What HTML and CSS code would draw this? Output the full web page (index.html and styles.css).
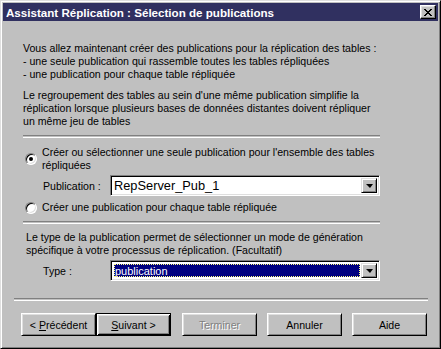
FILE: index.html
```html
<!DOCTYPE html>
<html lang="fr">
<head>
<meta charset="utf-8">
<title>Assistant Réplication</title>
<link rel="stylesheet" href="styles.css">
</head>
<body>
<div class="window">
  <div class="titlebar">
    <span class="title">Assistant Réplication : Sélection de publications</span>
    <span class="close"><svg width="8" height="7" viewBox="0 0 8 7"><path d="M0 0h2v1h1v1h2v-1h1v-1h2v1h-1v1h-1v1h-1v1h1v1h1v1h1v1h-2v-1h-1v-1h-2v1h-1v1h-2v-1h1v-1h1v-1h1v-1h-1v-1h-1v-1h-1z" fill="#000"/></svg></span>
  </div>
  <div class="main">
    <p class="intro">Vous allez maintenant créer des publications pour la réplication des tables :<br>- une seule publication qui rassemble toutes les tables répliquées<br>- une publication pour chaque table répliquée</p>
    <p class="intro second">Le regroupement des tables au sein d'une même publication simplifie la<br>réplication lorsque plusieurs bases de données distantes doivent répliquer<br>un même jeu de tables</p>
    <div class="sep"></div>
    <div class="option first">
      <span class="radio checked"></span>
      <span class="option-text">Créer ou sélectionner une seule publication pour l'ensemble des tables<br>répliquées</span>
    </div>
    <div class="field pub">
      <span class="field-label">Publication :</span>
      <div class="combo">
        <span class="combo-value big">RepServer_Pub_1</span>
        <span class="combo-btn"><span class="arrow"></span></span>
      </div>
    </div>
    <div class="option second-opt">
      <span class="radio"></span>
      <span class="option-text">Créer une publication pour chaque table répliquée</span>
    </div>
    <div class="sep sep2"></div>
    <p class="type-text">Le type de la publication permet de sélectionner un mode de génération<br>spécifique à votre processus de réplication. (Facultatif)</p>
    <div class="field type">
      <span class="field-label">Type :</span>
      <div class="combo">
        <span class="combo-value selected"><span class="sel">publication</span></span>
        <span class="combo-btn"><span class="arrow"></span></span>
      </div>
    </div>
  </div>
  <div class="sep bottom-sep"></div>
  <div class="buttons">
    <div class="pair">
      <button class="btn">&lt; <u>P</u>récédent</button>
      <button class="btn default"><u>S</u>uivant &gt;</button>
    </div>
    <button class="btn disabled">Terminer</button>
    <button class="btn">Annuler</button>
    <button class="btn">Aide</button>
  </div>
</div>
</body>
</html>
```

FILE: styles.css
```css
html, body {
  margin: 0;
  padding: 0;
  background: #c0c0c0;
}
body {
  font-family: "Liberation Sans", Arial, sans-serif;
  font-size: 10.6px;
  color: #000;
}
.window {
  width: 441px;
  height: 349px;
  box-sizing: border-box;
  background: #c0c0c0;
  border: 1px solid;
  border-color: #dfdfdf #000 #000 #dfdfdf;
  box-shadow: inset 1px 1px #fff, inset -1px -1px #808080;
  padding: 2px;
  display: flex;
  flex-direction: column;
}
.titlebar {
  height: 18px;
  background: #303060;
  color: #fff;
  display: flex;
  align-items: center;
  justify-content: space-between;
  padding: 0 2px 0 3px;
}
.title {
  font-weight: bold;
  font-size: 11.6px;
}
.close {
  width: 16px;
  height: 14px;
  box-sizing: border-box;
  background: #c0c0c0;
  border: 1px solid;
  border-color: #fff #000 #000 #fff;
  box-shadow: inset -1px -1px #808080, inset 1px 1px #dfdfdf;
  display: flex;
  align-items: center;
  justify-content: center;
}
.close svg { display: block; margin-left: -1px; }
.main {
  margin-left: 20px;
  width: 357px;
  display: flex;
  flex-direction: column;
}
p { margin: 0; }
.intro {
  line-height: 13px;
  margin-top: 21px;
  white-space: nowrap;
}
.intro.second { margin-top: 8px; }
.sep {
  height: 1px;
  border-top: 1px solid #808080;
  border-bottom: 1px solid #fff;
  margin-top: 7px;
}
.option {
  display: flex;
  align-items: center;
  line-height: 13px;
  margin-left: 2px;
}
.option.first { margin-top: 8px; }
.option.second-opt { margin-top: 5px; }
.option-text { margin-left: 5px; white-space: nowrap; }
.radio {
  width: 12px;
  height: 12px;
  box-sizing: border-box;
  border-radius: 50%;
  border: 1px solid;
  border-color: #808080 #fff #fff #808080;
  box-shadow: inset 1px 1px #000, inset -1px -1px #dfdfdf;
  background: #fff;
  position: relative;
  flex: none;
}
.radio.checked::after {
  content: "";
  position: absolute;
  left: 3px;
  top: 3px;
  width: 4px;
  height: 4px;
  border-radius: 50%;
  background: #000;
}
.field {
  display: flex;
  align-items: center;
}
.field-label {
  width: 67px;
  margin-left: 20px;
  white-space: nowrap;
}
.field.pub { margin-top: 3px; }
.field.type { margin-top: 3px; }
.combo {
  width: 270px;
  height: 21px;
  box-sizing: border-box;
  border: 1px solid;
  border-color: #808080 #fff #fff #808080;
  box-shadow: inset 1px 1px #000, inset -1px -1px #dfdfdf;
  background: #fff;
  display: flex;
  align-items: stretch;
  padding: 2px;
}
.combo-value {
  flex: 1;
  display: flex;
  align-items: center;
  padding-left: 1px;
  font-size: 11px;
}
.combo-value.big { font-size: 12.8px; }
.combo-value.selected { padding: 1px; }
.sel {
  flex: 1;
  align-self: stretch;
  display: flex;
  align-items: center;
  background: #000080;
  color: #fff;
  outline: 1px dotted #ffff80;
  outline-offset: -1px;
  padding-left: 1px;
}
.combo-btn {
  width: 16px;
  box-sizing: border-box;
  background: #c0c0c0;
  border: 1px solid;
  border-color: #dfdfdf #000 #000 #dfdfdf;
  box-shadow: inset 1px 1px #fff, inset -1px -1px #808080;
  display: flex;
  align-items: center;
  justify-content: center;
}
.arrow {
  width: 0;
  height: 0;
  border-left: 4px solid transparent;
  border-right: 3px solid transparent;
  border-top: 4px solid #000;
  margin-top: 1px;
}
.type-text {
  line-height: 13px;
  margin-top: 7px;
  margin-left: 3px;
  white-space: nowrap;
}
.bottom-sep {
  margin-top: 17px;
  margin-left: 11px;
  width: 414px;
}
.buttons {
  display: flex;
  margin-top: 12px;
  margin-left: 18px;
  gap: 10px;
}
.pair {
  display: flex;
  margin-right: 1px;
}
.btn {
  width: 75px;
  height: 23px;
  box-sizing: border-box;
  font-family: "Liberation Sans", Arial, sans-serif;
  font-size: 10.6px;
  color: #000;
  background: #c0c0c0;
  border: 1px solid;
  border-color: #fff #000 #000 #fff;
  box-shadow: inset 1px 1px #dfdfdf, inset -1px -1px #808080;
  padding: 0;
  margin: 0;
}
.btn.default {
  border: 1px solid #000;
  box-shadow: inset 1px 1px #fff, inset -1px -1px #000, inset 2px 2px #dfdfdf, inset -2px -2px #808080;
}
.btn.disabled {
  color: #808080;
  text-shadow: 1px 1px #fff;
}
```
